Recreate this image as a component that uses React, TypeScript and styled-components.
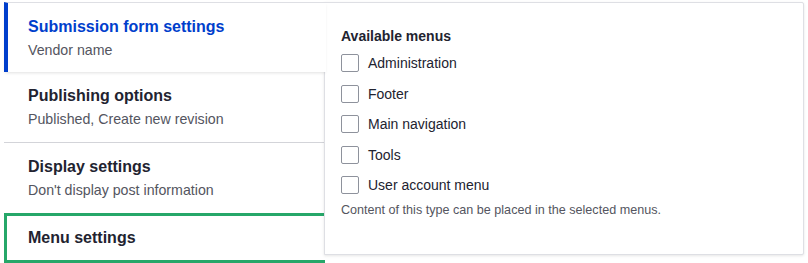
import React from "react";
import styled, { createGlobalStyle } from "styled-components";

const GlobalStyle = createGlobalStyle`
  html, body { margin: 0; padding: 0; background: #fff; }
  body { font-family: "Liberation Sans", Arial, sans-serif; color: #222330; }
  * { box-sizing: border-box; }
`;

const VerticalTabs = styled.div`
  display: flex;
  align-items: flex-start;
  margin: 2px 4px 0 4px;
  width: 800px;
`;

const Menu = styled.ul`
  list-style: none;
  margin: 0;
  padding: 0;
  width: 320px;
  flex-shrink: 0;
  display: flex;
  flex-direction: column;
`;

const Tab = styled.li<{ $active?: boolean; $focused?: boolean; $separator?: boolean }>`
  position: relative;
  display: flex;
  flex-direction: column;
  gap: 4px;
  padding: ${(p) => (p.$focused ? "12px 18px 12px 21px" : p.$active ? "14px 18px 13px 20px" : "14px 18px 14px 24px")};
  background: #fff;
  border-bottom: ${(p) => (p.$separator ? "1px solid #d3d4d9" : "none")};
  ${(p) =>
    p.$active &&
    `
    z-index: 2;
    margin-right: -2px;
    border-top: 1px solid #dedfe4;
    border-left: 4px solid #003ecc;
    box-shadow: 0 2px 3px -1px rgba(0, 0, 0, 0.12);
  `}
  ${(p) =>
    p.$focused &&
    `
    border: 3px solid #26a769;
    border-right: 0;
    margin-right: -1px;
  `}
`;

const TabTitle = styled.span<{ $active?: boolean }>`
  font-size: 16px;
  line-height: 20px;
  font-weight: 700;
  color: ${(p) => (p.$active ? "#003ecc" : "#222330")};
`;

const TabSummary = styled.span`
  font-size: 14.2px;
  line-height: 18px;
  color: #545560;
`;

const Pane = styled.div`
  position: relative;
  z-index: 1;
  flex: 1;
  border: 1px solid #dedfe4;
  border-radius: 0 2px 2px 0;
  box-shadow: 0 1px 3px rgba(0, 0, 0, 0.1);
  padding: 24px 16px 35px 16px;
  background: #fff;
  height: 253px;
`;

const Legend = styled.div`
  font-size: 14px;
  line-height: 18px;
  font-weight: 700;
  color: #222330;
  margin-bottom: 9px;
`;

const Options = styled.div`
  display: flex;
  flex-direction: column;
  gap: 12.5px;
`;

const Option = styled.label`
  display: flex;
  align-items: center;
  gap: 9px;
  height: 18px;
  font-size: 14px;
  color: #222330;
`;

const Box = styled.span`
  width: 18px;
  height: 18px;
  border: 1px solid #8e929c;
  border-radius: 2px;
  background: #fff;
  flex-shrink: 0;
`;

const Description = styled.div`
  margin-top: 8px;
  font-size: 12.6px;
  line-height: 17px;
  color: #545560;
`;

const tabs = [
  { title: "Submission form settings", summary: "Vendor name", active: true },
  { title: "Publishing options", summary: "Published, Create new revision", separator: true },
  { title: "Display settings", summary: "Don't display post information" },
  { title: "Menu settings", focused: true },
];

const menus = ["Administration", "Footer", "Main navigation", "Tools", "User account menu"];

export default function App() {
  return (
    <>
      <GlobalStyle />
      <VerticalTabs>
        <Menu>
          {tabs.map((t) => (
            <Tab key={t.title} $active={t.active} $focused={t.focused} $separator={t.separator}>
              <TabTitle $active={t.active}>{t.title}</TabTitle>
              {t.summary && <TabSummary>{t.summary}</TabSummary>}
            </Tab>
          ))}
        </Menu>
        <Pane>
          <Legend>Available menus</Legend>
          <Options>
            {menus.map((m) => (
              <Option key={m}>
                <Box />
                {m}
              </Option>
            ))}
          </Options>
          <Description>Content of this type can be placed in the selected menus.</Description>
        </Pane>
      </VerticalTabs>
    </>
  );
}
